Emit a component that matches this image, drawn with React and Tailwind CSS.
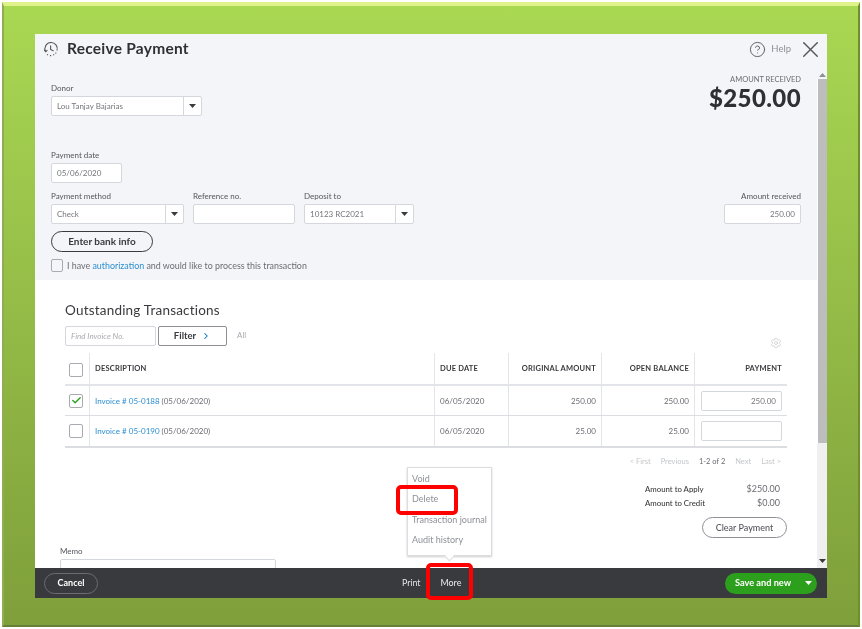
import React from 'react';
import { CircleHelp, X, Settings, Check, ChevronRight } from 'lucide-react';

const Caret = ({ className = 'text-[#393a3d]' }) => (
  <svg width="7" height="4" viewBox="0 0 7 4" className={className}>
    <path d="M0 0h7L3.5 4z" fill="currentColor" />
  </svg>
);

const Label = ({ children, className = '' }) => (
  <div className={`text-[8px] leading-[10px] text-[#55565b] mb-[3px] ${className}`}>{children}</div>
);

const Input = ({ value, className = '' }) => (
  <div className={`h-[20px] bg-white border border-[#d4d7dc] rounded-[2px] px-[5px] flex items-center text-[8px] text-[#75767b] ${className}`}>
    {value}
  </div>
);

const Select = ({ value, width, arrow = 'w-[18px]' }) => (
  <div className={`h-[20px] bg-white border border-[#d4d7dc] rounded-[2px] flex text-[8px] text-[#75767b] ${width}`}>
    <div className="flex-1 flex items-center px-[5px] whitespace-nowrap">{value}</div>
    <div className={`${arrow} border-l border-[#d4d7dc] flex items-center justify-center`}>
      <Caret />
    </div>
  </div>
);

const Box = ({ checked }) => (
  <div className="w-[14px] h-[14px] bg-white border border-[#a9abb0] rounded-[2px] flex items-center justify-center">
    {checked && <Check size={11} strokeWidth={3} className="text-[#2ca01c]" />}
  </div>
);

const ROWS = [
  { id: '05-0188', orig: '250.00', open: '250.00', pay: '250.00', checked: true },
  { id: '05-0190', orig: '25.00', open: '25.00', pay: '', checked: false },
];

const th = 'border-l border-[#e3e5e8] flex items-center text-[7.5px] font-bold text-[#393a3d] tracking-[0.2px]';
const td = 'border-l border-[#e3e5e8] flex items-center text-[8px] text-[#6b6c72]';

export default function App() {
  return (
    <div className="w-[862px] h-[629px] bg-white p-[2px] overflow-hidden font-['Lato',sans-serif]">
      <div className="w-full h-full pt-[28px] pl-[31px] border-t-[4px] border-t-[#dff38a] border-l-[2px] border-l-[#8fae52] border-r-[2px] border-r-[#6f8f2f] border-b-[2px] border-b-[#66803a] bg-gradient-to-b from-[#a9d853] to-[#7f9f3b]">
        <div className="relative w-[792px] h-[564px] flex flex-col bg-white blur-[0.3px]">
          {/* title bar */}
          <div className="h-[36px] bg-[#f4f5f8] flex items-center pl-[8px] pr-[3px] pb-[6px]">
            <svg width="16" height="16" viewBox="0 0 16 16" fill="none" stroke="#55565b" strokeWidth="1.1" className="mr-[8px]">
              <path d="M2.6 10.5A6.2 6.2 0 1 1 14 9.6" />
              <path d="M13.2 11.6l-.7.9M11.2 13.6l-1 .5M8.2 14.6H7M5 14l-1-.6" />
              <path d="M7.6 4.6v3.8l3 1.6" />
              <path d="M1.2 8.6l1.4 2 1.8-1.4" />
            </svg>
            <h1 className="text-[15.5px] font-bold text-[#2f3033] tracking-[0.25px]">Receive Payment</h1>
            <CircleHelp size={17} strokeWidth={1.3} className="ml-auto text-[#55565b]" />
            <span className="text-[9.5px] text-[#8d9096] ml-[5px] mr-[6px]">Help</span>
            <X size={27} strokeWidth={1.25} className="text-[#55565b]" />
          </div>

          <div className="flex-1 flex min-h-0">
            <div className="w-[782px] flex flex-col">
              {/* header form */}
              <div className="h-[210px] bg-[#f4f5f8] pl-[16px] pr-[16px] pt-[13px] flex justify-between">
                <div className="flex flex-col">
                  <Label>Donor</Label>
                  <Select value="Lou Tanjay Bajarias" width="w-[151px]" />
                  <Label className="mt-[34px]">Payment date</Label>
                  <Input value="05/06/2020" className="w-[71px]" />
                  <div className="flex gap-[9px] mt-[8px]">
                    <div>
                      <Label>Payment method</Label>
                      <Select value="Check" width="w-[133px]" />
                    </div>
                    <div>
                      <Label>Reference no.</Label>
                      <Input className="w-[102px]" />
                    </div>
                    <div>
                      <Label>Deposit to</Label>
                      <Select value="10123 RC2021" width="w-[110px]" />
                    </div>
                  </div>
                  <button className="w-[102px] h-[21px] mt-[7px] rounded-full border border-[#393a3d] bg-[#f4f5f8] text-[10px] font-bold text-[#393a3d]">
                    Enter bank info
                  </button>
                  <div className="flex items-center gap-[4px] mt-[7px] text-[8.9px] text-[#6b6c72]">
                    <div className="w-[12px] h-[13px] bg-[#f4f5f8] border border-[#a9abb0] rounded-[2px]" />
                    <span>I have <span className="text-[#2d8fd0]">authorization</span> and would like to process this transaction</span>
                  </div>
                </div>
                <div className="flex flex-col items-end">
                  <div className="text-[7.5px] leading-[10px] text-[#6b6c72] mt-[-8px]">AMOUNT RECEIVED</div>
                  <div className="text-[24px] leading-[26px] font-black text-[#2f3033] tracking-[0.4px]">$250.00</div>
                  <Label className="mt-[80px]">Amount received</Label>
                  <Input value="250.00" className="w-[77px] justify-end" />
                </div>
              </div>

              {/* transactions */}
              <div className="flex-1 bg-white pl-[30px] pr-[30px] pt-[22px] flex flex-col min-h-0 overflow-hidden">
                <h2 className="text-[13.5px] leading-[17px] text-[#393a3d] tracking-[0.2px]">Outstanding Transactions</h2>
                <div className="flex items-start mt-[7px]">
                  <div className="w-[91px] h-[20px] border border-[#d4d7dc] rounded-[2px] flex items-center px-[5px] text-[8px] italic text-[#a9abb0]">
                    Find Invoice No.
                  </div>
                  <button className="w-[69px] h-[20px] ml-[2px] border border-[#8d9096] rounded-[2px] flex items-center justify-center gap-[5px] text-[9.5px] font-bold text-[#393a3d]">
                    Filter <ChevronRight size={10} strokeWidth={2.5} className="text-[#0077c5]" />
                  </button>
                  <span className="ml-[10px] text-[8px] text-[#a9abb0] mt-[3px]">All</span>
                  <Settings size={12} strokeWidth={1.2} className="ml-auto mr-[5px] mt-[11px] text-[#bdbfc3]" />
                </div>

                <div className="mt-[4px] w-[722px] border-b-2 border-[#dcdde0]">
                  <div className="flex h-[33px] border-b-2 border-[#e3e4ea]">
                    <div className="w-[24px] flex items-center pl-[4px] pt-[3px]"><Box /></div>
                    <div className={`${th} w-[345px] pl-[5px]`}>DESCRIPTION</div>
                    <div className={`${th} w-[74px] pl-[5px]`}>DUE DATE</div>
                    <div className={`${th} w-[93px] justify-end pr-[5px]`}>ORIGINAL AMOUNT</div>
                    <div className={`${th} w-[93px] justify-end pr-[5px]`}>OPEN BALANCE</div>
                    <div className={`${th} w-[93px] justify-end pr-[5px]`}>PAYMENT</div>
                  </div>
                  {ROWS.map((row, i) => (
                    <div key={row.id} className={`flex h-[30px] ${i === 0 ? 'border-b border-[#dcdde0]' : ''}`}>
                      <div className="w-[24px] flex items-center pl-[4px]"><Box checked={row.checked} /></div>
                      <div className={`${td} w-[345px] pl-[5px]`}>
                        <span className="text-[#2d8fd0] mr-[2px]">Invoice # {row.id}</span> (05/06/2020)
                      </div>
                      <div className={`${td} w-[74px] pl-[5px]`}>06/05/2020</div>
                      <div className={`${td} w-[93px] justify-end pr-[5px]`}>{row.orig}</div>
                      <div className={`${td} w-[93px] justify-end pr-[5px]`}>{row.open}</div>
                      <div className={`${td} w-[93px] pl-[6px]`}>
                        <Input value={row.pay} className="w-[81px] justify-end" />
                      </div>
                    </div>
                  ))}
                </div>

                <div className="flex justify-end gap-[10px] w-[716px] mt-[9px] text-[7.5px] leading-[10px] text-[#c4c6ca]">
                  <span>&lt; First</span>
                  <span>Previous</span>
                  <span className="text-[#6b6c72]">1-2 of 2</span>
                  <span>Next</span>
                  <span>Last &gt;</span>
                </div>

                <div className="flex justify-between">
                  <div className="pt-[79px] ml-[-5px]">
                    <Label>Memo</Label>
                    <div className="w-[216px] h-[20px] border border-[#d4d7dc] rounded-[2px]" />
                  </div>
                  <div className="flex flex-col items-end w-[143px] pt-[15px]">
                    <div className="w-[135px] flex justify-between mr-[7px] text-[7.8px] leading-[14px]">
                      <span className="w-[58px] text-right font-medium text-[#393a3d] whitespace-nowrap">Amount to Apply</span>
                      <span className="text-[#6b6c72] text-[9px]">$250.00</span>
                    </div>
                    <div className="w-[135px] flex justify-between mr-[7px] text-[7.8px] leading-[14px]">
                      <span className="w-[58px] text-right font-medium text-[#393a3d] whitespace-nowrap">Amount to Credit</span>
                      <span className="text-[#6b6c72] text-[9px]">$0.00</span>
                    </div>
                    <button className="w-[85px] h-[21px] mt-[7px] rounded-full border border-[#8d9096] text-[9px] font-medium text-[#55565b]">
                      Clear Payment
                    </button>
                  </div>
                </div>
              </div>
            </div>

            {/* scrollbar */}
            <div className="w-[10px] flex flex-col items-center">
              <div className="h-[9px] w-full bg-[#f4f5f8] flex items-center justify-center">
                <Caret className="text-[#8d9096] rotate-180" />
              </div>
              <div className="w-[9px] h-[364px] bg-[#bdbdbd]" />
              <div className="flex-1 w-full bg-[#f0f0f0] flex items-end justify-center pb-[5px]">
                <Caret className="text-[#393a3d]" />
              </div>
            </div>
          </div>

          {/* footer */}
          <div className="relative z-10 h-[30px] bg-[#393a3d] flex items-center pl-[9px] pr-[7px] text-white">
            <button className="w-[54px] h-[21px] rounded-full border border-[#6b6c72] text-[9px] font-bold">Cancel</button>
            <div className="flex items-center ml-[304px] text-[8.8px] text-[#e3e5e8]">
              <span>Print</span>
              <span className="ml-[20px] font-medium">More</span>
            </div>
            <div className="ml-auto mr-[3px] w-[92px] h-[21px] rounded-full bg-[#2ca01c] flex items-center justify-between pl-[10px] pr-[5px] text-[9.2px] font-bold">
              Save and new <Caret className="text-white" />
            </div>
          </div>

          {/* More menu */}
          <div className="absolute left-[372px] top-[433px] w-[85px] h-[89px] z-20 bg-white border border-[#dcdde0] shadow-[0_1px_2px_rgba(0,0,0,0.2)] pl-[4px] pt-[5px] flex flex-col gap-[8.3px] text-[9px] leading-[12px] text-[#8d9096]">
            <span>Void</span>
            <span>Delete</span>
            <span>Transaction journal</span>
            <span>Audit history</span>
            <div className="absolute left-[38px] top-[85px] w-[7px] h-[7px] rotate-45 bg-white border-r border-b border-[#dcdde0]" />
          </div>

          {/* red callouts */}
          <div className="absolute left-[361px] top-[451px] w-[62px] h-[30px] z-30 border-[4px] border-[#ff0000] rounded-[5px]" />
          <div className="absolute left-[391px] top-[529px] w-[47px] h-[37px] z-30 border-[4px] border-[#ff0000] rounded-[5px]" />
        </div>
      </div>
    </div>
  );
}
